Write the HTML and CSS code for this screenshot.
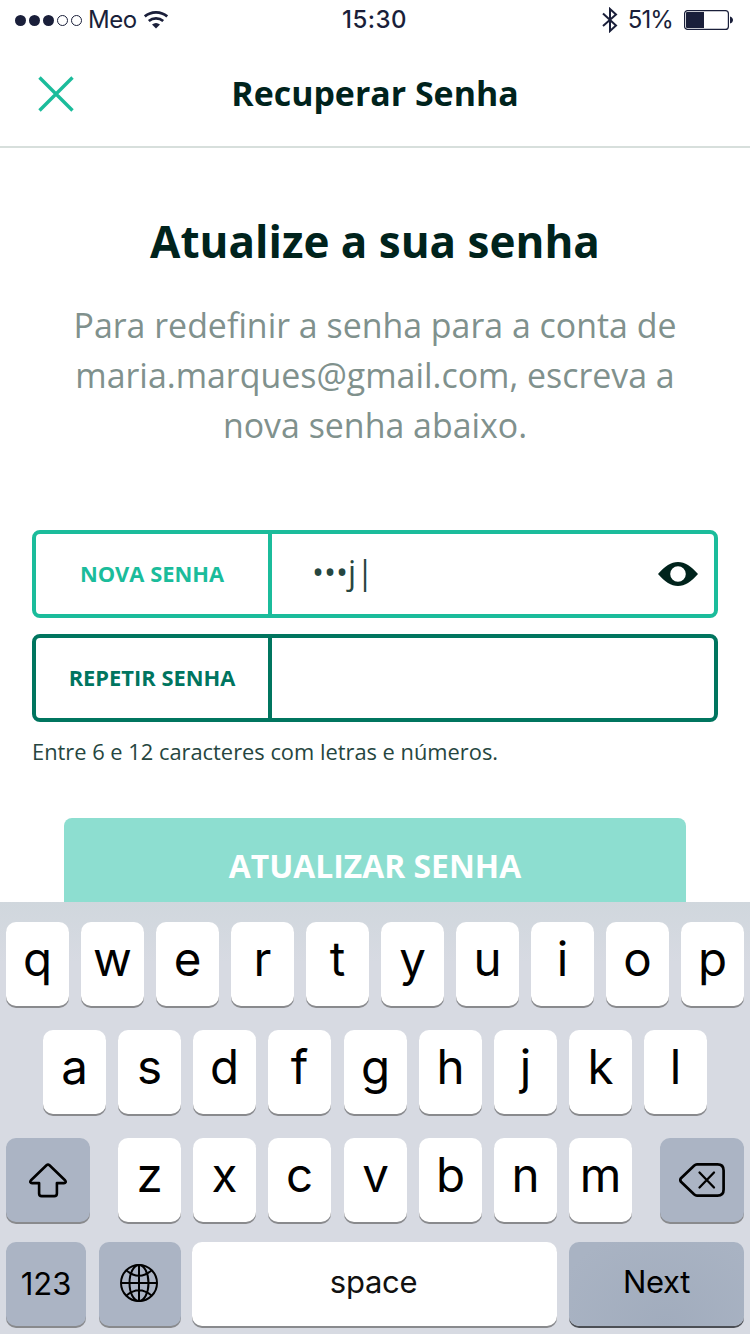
FILE: index.html
```html
<!DOCTYPE html>
<html lang="pt">
<head>
<meta charset="utf-8">
<title>Recuperar Senha</title>
<link rel="stylesheet" href="styles.css">
</head>
<body>
<div class="screen">
  <header class="status">
    <div class="status-left">
      <svg class="signal" width="68" height="12" viewBox="0 0 68 12"><g fill="#1a1f3a"><circle cx="5.5" cy="6.500" r="5.5"/><circle cx="19.5" cy="6.500" r="5.5"/><circle cx="33.5" cy="6.500" r="5.5"/></g><g fill="none" stroke="#1a1f3a"><circle cx="47.5" cy="6.500" r="5"/><circle cx="61.5" cy="6.500" r="5"/></g></svg>
      <span class="carrier">Meo</span>
      <svg class="wifi" width="24" height="18" viewBox="0 0 24 18"><g fill="none" stroke="#1a1f3a" stroke-width="2.7"><path d="M.8 5.400a17.500 17.500 0 0 1 22.400 0"/><path d="M4.800 10a11.200 11.200 0 0 1 14.400 0"/></g><path d="M8 13.600a6.200 6.200 0 0 1 8 0L12 17.500z" fill="#1a1f3a"/></svg>
    </div>
    <span class="clock">15:30</span>
    <div class="status-right">
      <svg width="16" height="26" viewBox="0 0 16 26"><path d="M1 6.500L14 18.500L8 24V2L14 7.500L1 19" fill="none" stroke="#1a1f3a" stroke-width="2"/></svg>
      <span class="percent">51%</span>
      <svg class="battery" width="50" height="20" viewBox="0 0 50 20"><rect x=".6" y=".6" width="43.800" height="18.800" rx="3" fill="none" stroke="#1a1f3a" stroke-width="1.200"/><path d="M2 3a1 1 0 0 1 1-1h17v16H3a1 1 0 0 1-1-1zM46 6.500c4 1 4 6 0 7z" fill="#1a1f3a"/></svg>
    </div>
  </header>
  <nav class="navbar">
    <svg class="close" width="36" height="36" viewBox="0 0 36 36"><path d="M1.500 1.500L34.500 34.500M34.500 1.500L1.500 34.500" stroke="#1bbc9b" stroke-width="3.400"/></svg>
    <h1 class="nav-title">Recuperar Senha</h1>
  </nav>
  <main class="content">
    <h2 class="heading">Atualize a sua senha</h2>
    <p class="intro">Para redefinir a senha para a conta de<br>maria.marques@gmail.com, escreva a<br>nova senha abaixo.</p>
    <form class="form">
      <div class="field field-active">
        <label class="label">NOVA SENHA</label>
        <div class="value"><span class="typed">•••j|</span>
          <svg class="eye" width="40" height="24" viewBox="0 0 40 24"><path fill-rule="evenodd" d="M0 12C7 4 13 0 20 0s13 4 20 12c-7 8-13 12-20 12S7 20 0 12zM20 4.200a7.800 7.800 0 1 0 0 15.600a7.800 7.800 0 1 0 0-15.600z" fill="#00231c"/></svg>
        </div>
      </div>
      <div class="field">
        <label class="label">REPETIR SENHA</label>
        <div class="value"></div>
      </div>
    </form>
    <p class="hint">Entre 6 e 12 caracteres com letras e números.</p>
    <div class="submit">ATUALIZAR SENHA</div>
  </main>
  <section class="keyboard">
    <div class="row row-top"><b class="key">q</b><b class="key">w</b><b class="key">e</b><b class="key">r</b><b class="key">t</b><b class="key">y</b><b class="key">u</b><b class="key">i</b><b class="key">o</b><b class="key">p</b></div>
    <div class="row row-home"><b class="key">a</b><b class="key">s</b><b class="key">d</b><b class="key">f</b><b class="key key-mid">g</b><b class="key">h</b><b class="key">j</b><b class="key">k</b><b class="key">l</b></div>
    <div class="row row-lower">
      <b class="key key-dark key-shift"><svg width="38" height="35" viewBox="0 0 38 35"><path d="M17.500 2.200L2 17.200C.6 19 1.400 20.100 3 20.100H10.100V30.500Q10.100 33.100 12.700 33.100H25.300Q27.900 33.100 27.900 30.500V20.100H35C36.600 20.100 37.400 19 36 17.200L20.500 2.200Q19 .9 17.500 2.200z" fill="none" stroke="#000" stroke-width="2.600" stroke-linejoin="round"/></svg></b>
      <b class="key">z</b><b class="key">x</b><b class="key">c</b><b class="key key-mid">v</b><b class="key">b</b><b class="key">n</b><b class="key">m</b>
      <b class="key key-dark key-delete"><svg width="46" height="34" viewBox="0 0 46 34"><path d="M18 1.400H38.500Q44.600 1.400 44.600 7.500V26.500Q44.600 32.600 38.500 32.600H18Q16.500 32.600 15 31.300L2 18.800Q.6 17 2 15.200L15 2.700Q16.500 1.400 18 1.400z" fill="none" stroke="#000" stroke-width="2.700"/><path d="M20.500 9.500L35 24.500M35 9.500L20.500 24.500" stroke="#000" stroke-width="2.300" stroke-linecap="round"/></svg></b>
    </div>
    <div class="row row-bottom">
      <b class="key key-dark key-num">123</b>
      <b class="key key-dark key-globe"><svg width="38" height="38" viewBox="0 0 38 38"><g fill="none" stroke="#000" stroke-width="2"><circle cx="19" cy="19" r="18"/><ellipse cx="19" cy="19" rx="9.500" ry="18"/><path d="M19 1V37M1 19H37M6.500 6.500Q19 17 31.500 6.500M6.500 31.500Q19 21 31.500 31.500"/></g></svg></b>
      <b class="key key-space">space</b>
      <b class="key key-dark key-next">Next</b>
    </div>
  </section>
</div>
</body>
</html>
```
FILE: styles.css
```css
* { box-sizing: border-box; }
body, h1, h2, p { margin: 0; }
svg { display: block; flex: none; }
.screen { width: 750px; height: 1334px; display: flex; flex-direction: column; overflow: hidden; background: #fff; font-family: "Open Sans", sans-serif; color: #00231c; }

.status { height: 40px; flex: none; display: grid; grid-template-columns: 1fr auto 1fr; align-items: center; padding: 0 16px 0 15px; font: 400 24px/40px Inter, sans-serif; color: #1a1f3a; }
.status-left, .status-right { display: flex; align-items: center; }
.status-right { justify-content: flex-end; }
.carrier { margin: 0 7px 0 5px; letter-spacing: -0.4px; }
.clock { font-weight: 500; letter-spacing: 0.5px; }
.percent { margin: 0 11px 0 10px; letter-spacing: -0.9px; }

.navbar { height: 108px; flex: none; display: grid; grid-template-columns: 36px 1fr 36px; align-items: center; padding: 0 38px; border-bottom: 2px solid #d7dfdc; }
.close { margin-top: 2px; }
.nav-title { font-size: 33.9px; line-height: 46px; font-weight: 700; text-align: center; }

.content { height: 754px; flex: none; padding: 63px 32px 0; overflow: hidden; }
.heading { font-size: 44px; line-height: 60px; font-weight: 700; text-align: center; }
.intro { margin-top: 29px; font-size: 33.9px; line-height: 50px; text-align: center; color: #80918d; }

.form { margin-top: 80px; display: grid; gap: 16px; }
.field { height: 88px; display: flex; border: 4px solid #00755f; border-radius: 8px; color: #00755f; }
.field-active { border-color: #1bbc9b; color: #1bbc9b; }
.label { width: 236px; border-right: 4px solid; font-size: 21.9px; line-height: 79px; font-weight: 700; text-align: center; }
.value { flex: 1; display: flex; align-items: center; padding: 0 16px 0 40px; color: #264640; font-size: 32px; line-height: 76px; }
.typed { align-self: flex-start; }
.eye { margin-left: auto; }
.hint { margin-top: 15px; font-size: 21.850px; line-height: 30px; color: #264640; }
.submit { margin: 51px 32px 0; height: 96px; border-radius: 8px; background: #8dded0; color: #fff; font-size: 31.850px; line-height: 96px; font-weight: 700; text-align: center; }

.keyboard { height: 432px; flex: none; padding-top: 20px; background: linear-gradient(#d0d7dd, #d7dae2 60px); font-family: Inter, sans-serif; }
.row { height: 84px; display: flex; gap: 12px; margin: 0 6px 24px; }
.row-home { margin-left: 43px; }
.row-lower { margin-bottom: 20px; }
.key { width: 63px; height: 84px; flex: none; display: flex; justify-content: center; align-items: center; border-radius: 10px; background: #fff; box-shadow: 0 2px 0 #898a8d; color: #000; font-size: 47.5px; line-height: 76px; font-weight: 400; padding-bottom: 10px; }
.key-mid { margin-left: 1px; }
.key-dark { background: #abb4c4; padding: 0; }
.key-shift { width: 84px; margin-right: 16px; }
.key-delete { width: 84px; margin-left: 16px; }
.row-bottom { gap: 0; }
.key-num { width: 80px; margin-right: 13px; font-size: 31px; }
.key-globe { width: 82px; margin-right: 11px; padding: 0 2px 2px 0; }
.key-space { width: 365px; margin-right: 12px; font-size: 31px; letter-spacing: -0.3px; padding: 0 2px 5px 0; color: #111; }
.key-next { width: 175px; font-size: 31px; letter-spacing: -0.3px; padding-bottom: 5px; background: radial-gradient(ellipse at 55% 100%, #a1acbd, #a9b3c3 85%); box-shadow: 0 2px 0 #4c4f55; }
```
